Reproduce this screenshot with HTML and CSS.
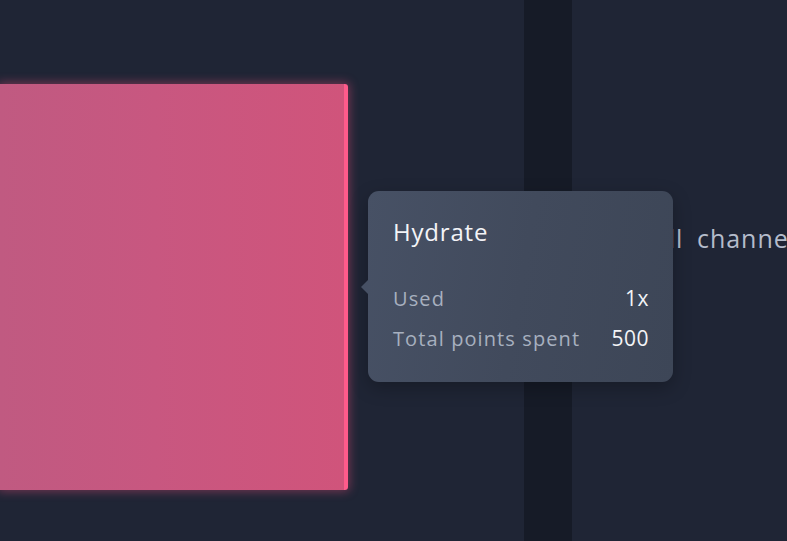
FILE: index.html
```html
<!DOCTYPE html>
<html>
<head>
<meta charset="utf-8">
<link rel="stylesheet" href="styles.css">
</head>
<body>
<div class="page">
  <div class="chart">
    <div class="bar"></div>
  </div>
  <div class="divider"></div>
  <div class="legend">
    <div class="legend-text">All channels</div>
  </div>
  <div class="tooltip">
    <div class="tt-title">Hydrate</div>
    <div class="tt-rows">
      <div class="tt-row"><span class="tt-label">Used</span><span class="tt-value">1x</span></div>
      <div class="tt-row"><span class="tt-label">Total points spent</span><span class="tt-value">500</span></div>
    </div>
  </div>
</div>
</body>
</html>
```

FILE: styles.css
```css
html, body {
  margin: 0;
  padding: 0;
  background: #1f2535;
  width: 787px;
  height: 541px;
  overflow: hidden;
  font-family: "Open Sans", "Lato", sans-serif;
}
.page {
  position: relative;
  display: flex;
  width: 787px;
  height: 541px;
}
.chart {
  width: 524px;
  flex: none;
  padding-top: 84px;
  box-sizing: border-box;
}
.bar {
  width: 344px;
  height: 406px;
  background: linear-gradient(90deg, #c05a81 0%, #c85780 45%, #d0547b 100%);
  border-right: 4px solid #ff5b8b;
  border-radius: 0 3px 3px 0;
  box-shadow: 0 0 10px 2px rgba(255, 80, 130, 0.35);
}
.divider {
  width: 48px;
  flex: none;
  background: #161b27;
}
.legend {
  flex: 1;
  padding-top: 221px;
  padding-left: 80px;
  overflow: hidden;
}
.legend-text {
  font-size: 25px;
  letter-spacing: 1px;
  word-spacing: 6px;
  color: #b4bccb;
  white-space: nowrap;
  line-height: 34px;
}
.tooltip {
  position: absolute;
  left: 368px;
  top: 191px;
  width: 305px;
  height: 191px;
  box-sizing: border-box;
  padding: 24px 24px 0 25px;
  border-radius: 11px;
  background: linear-gradient(100deg, #475165 0%, #414a5c 50%, #3d4657 100%);
  box-shadow: 0 6px 18px rgba(0, 0, 0, 0.25);
}
.tooltip::before {
  content: "";
  position: absolute;
  left: -7px;
  top: 89px;
  border-top: 7px solid transparent;
  border-bottom: 7px solid transparent;
  border-right: 7px solid #465064;
}
.tt-title {
  font-size: 24px;
  letter-spacing: 0.8px;
  color: #f3f4f7;
  line-height: 34px;
}
.tt-rows {
  margin-top: 34px;
  display: flex;
  flex-direction: column;
  gap: 10px;
}
.tt-row {
  display: flex;
  justify-content: space-between;
  align-items: baseline;
  height: 30px;
  line-height: 30px;
}
.tt-label {
  font-size: 20px;
  letter-spacing: 1.1px;
  color: #a7b0bf;
}
.tt-value {
  font-size: 21px;
  letter-spacing: 0.5px;
  color: #f3f4f7;
}
```
